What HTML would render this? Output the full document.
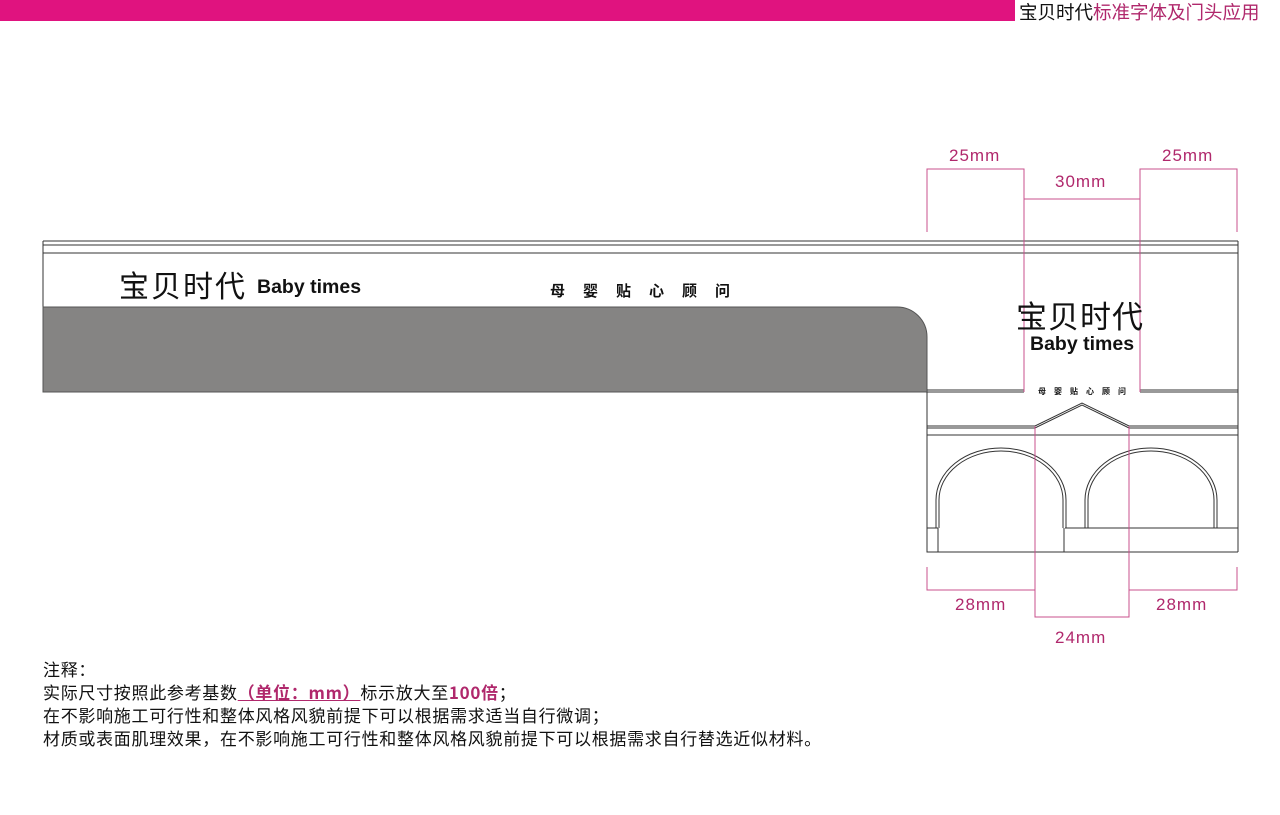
<!DOCTYPE html>
<html><head><meta charset="utf-8"><style>
html,body{margin:0;padding:0;background:#fff;width:1280px;height:815px;overflow:hidden;position:relative;font-family:"Liberation Sans","Noto Sans CJK SC",sans-serif}
.t{position:absolute;white-space:nowrap}
.cn{font-family:"Noto Sans CJK SC",sans-serif}
.pk{color:#b0286c}
.dm{font-size:17px;letter-spacing:1px}
</style></head><body>
<div style="position:absolute;left:0;top:0;width:1015px;height:21px;background:#e0137f"></div>
<div class="t cn" style="left:1019px;top:1px;font-size:18.5px;line-height:22px;color:#111">宝贝时代<span style="color:#b0286c">标准字体及门头应用</span></div>

<svg width="1280" height="815" style="position:absolute;left:0;top:0" fill="none">
<g stroke="#333" stroke-width="1">
<path d="M43 241H1238M43 245H1238M43 253H1238M43 241V392M1238 241V552"/>
<path d="M43 307H897A30 30 0 0 1 927 337V392H43Z" fill="#858483" stroke="#555"/>
<path d="M927 390H1024M1140 390H1238M927 392H1024M1140 392H1238"/>
<path d="M927 392V552H1238"/>
<path d="M927 426H1035L1082 403L1129 426H1238M927 428H1035L1082 405L1129 428H1238"/>
<path d="M927 435H1238"/>
<path d="M927 528H938M1065 528H1238M938 552V528M1064 552V528"/>
<path d="M936 528V500A65 52 0 0 1 1066 500V528M939 528V500A62 49 0 0 1 1063 500V528"/>
<path d="M1085 528V500A66 52 0 0 1 1217 500V528M1088 528V500A63 49 0 0 1 1214 500V528"/>
</g>
<g stroke="#c8508c" stroke-width="1">
<path d="M927 232V169H1024V392M1237 232V169H1140V392M1024 199H1140"/>
<path d="M927 567V590H1035M1237 567V590H1129M1035 426V617H1129V426"/>
</g>
</svg>

<div class="t cn" style="left:119px;top:266px;font-size:30px;line-height:36px;font-weight:400;color:#111;letter-spacing:2px">宝贝时代</div>
<div class="t" style="left:257px;top:276px;font-size:19.5px;font-weight:bold;color:#111">Baby times</div>
<div class="t cn" style="left:550px;top:280px;font-size:15px;font-weight:bold;color:#111;letter-spacing:18px">母婴贴心顾问</div>

<div class="t cn" style="left:1016px;top:297px;font-size:31px;line-height:36px;font-weight:400;color:#111;letter-spacing:1px">宝贝时代</div>
<div class="t" style="left:1030px;top:333px;font-size:19.5px;font-weight:bold;color:#111">Baby times</div>
<div class="t cn" style="left:1038px;top:386px;font-size:8px;font-weight:bold;color:#111;letter-spacing:8px">母婴贴心顾问</div>

<div class="t pk dm" style="left:949px;top:146px">25mm</div>
<div class="t pk dm" style="left:1055px;top:172px">30mm</div>
<div class="t pk dm" style="left:1162px;top:146px">25mm</div>
<div class="t pk dm" style="left:955px;top:595px">28mm</div>
<div class="t pk dm" style="left:1156px;top:595px">28mm</div>
<div class="t pk dm" style="left:1055px;top:628px">24mm</div>

<div class="t cn" style="left:43px;top:657px;font-size:17px;line-height:23px;color:#111;letter-spacing:0.7px">注释：<br>实际尺寸按照此参考基数<span class="pk" style="font-weight:bold;text-decoration:underline">（单位：mm）</span>标示放大至<span class="pk" style="font-weight:bold">100倍</span>；<br>在不影响施工可行性和整体风格风貌前提下可以根据需求适当自行微调；<br>材质或表面肌理效果，在不影响施工可行性和整体风格风貌前提下可以根据需求自行替选近似材料。</div>
</body></html>
